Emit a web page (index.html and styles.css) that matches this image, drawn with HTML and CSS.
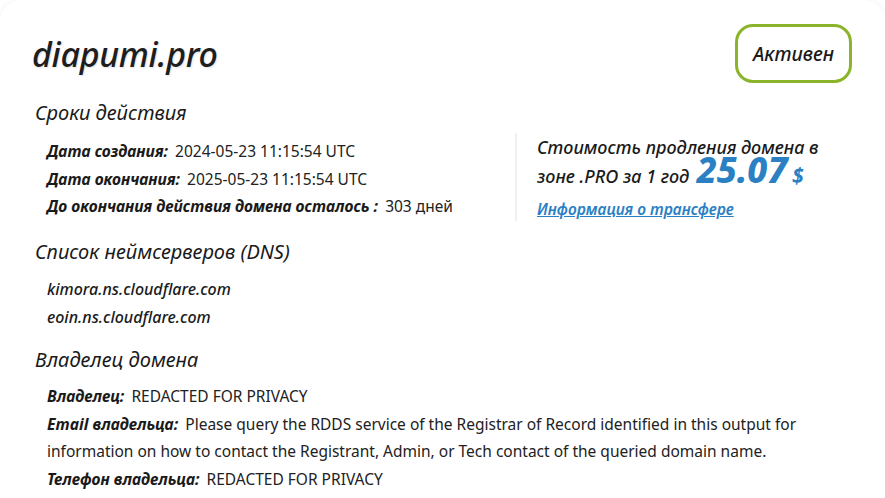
FILE: index.html
```html
<!DOCTYPE html>
<html lang="ru">
<head>
<meta charset="utf-8">
<link rel="stylesheet" href="styles.css">
</head>
<body>
<div class="card">
  <header class="top">
    <h1 class="domain">diapumi.pro</h1>
    <div class="badge">Активен</div>
  </header>

  <section class="section">
    <h2 class="heading">Сроки действия</h2>
    <div class="split">
      <div class="rows dates">
        <div class="row"><span class="label">Дата создания:</span> <span class="value">2024-05-23 11:15:54 UTC</span></div>
        <div class="row"><span class="label">Дата окончания:</span> <span class="value">2025-05-23 11:15:54 UTC</span></div>
        <div class="row"><span class="label">До окончания действия домена осталось :</span> <span class="value">303 дней</span></div>
      </div>
      <div class="price">
        <div class="price-text">Стоимость продления домена в зоне .PRO за 1 год <span class="amount">25.07</span> <span class="currency">$</span></div>
        <a class="transfer" href="#">Информация о трансфере</a>
      </div>
    </div>
  </section>

  <section class="section">
    <h2 class="heading">Список неймсерверов (DNS)</h2>
    <div class="rows servers">
      <div class="row ns">kimora.ns.cloudflare.com</div>
      <div class="row ns">eoin.ns.cloudflare.com</div>
    </div>
  </section>

  <section class="section">
    <h2 class="heading">Владелец домена</h2>
    <div class="rows owner">
      <div class="row"><span class="label">Владелец:</span> <span class="value">REDACTED FOR PRIVACY</span></div>
      <div class="row"><span class="label">Email владельца:</span> <span class="value">Please query the RDDS service of the Registrar of Record identified in this output for information on how to contact the Registrant, Admin, or Tech contact of the queried domain name.</span></div>
      <div class="row"><span class="label">Телефон владельца:</span> <span class="value">REDACTED FOR PRIVACY</span></div>
    </div>
  </section>
</div>
</body>
</html>
```

FILE: styles.css
```css
* { box-sizing: border-box; }
html, body { margin: 0; padding: 0; background: #ffffff; }
body {
  font-family: "Noto Sans", "Open Sans", sans-serif;
  color: #1a1a1a;
}
.card {
  background: #fff;
  border-radius: 22px;
  box-shadow: 0 0 10px rgba(0,0,0,0.05);
  padding: 22px 32px 0 32px;
  min-height: 520px;
}
.top {
  display: flex;
  justify-content: space-between;
  align-items: flex-start;
  margin-bottom: 16px;
}
.domain {
  margin: 10px 0 0 0;
  font-size: 34px;
  font-style: italic;
  font-weight: 500;
  line-height: 44px;
  color: #1e1e1e;
  text-shadow: 1px 1px 2px rgba(0,0,0,0.12);
  letter-spacing: -0.3px;
}
.badge {
  margin-top: 2px;
  margin-right: 1px;
  width: 117px;
  height: 59px;
  border: 3px solid #8ab52b;
  border-radius: 18px;
  display: flex;
  align-items: center;
  justify-content: center;
  font-style: italic;
  font-size: 19.5px;
  font-weight: 500;
  color: #1a1a1a;
}
.section { margin: 0; }
.heading {
  margin: 0;
  padding-left: 3px;
  font-size: 20px;
  font-style: italic;
  font-weight: 400;
  line-height: 28px;
  color: #1a1a1a;
}
.split {
  display: flex;
  align-items: flex-start;
}
.rows { padding-left: 15px; }
.dates { width: 483px; padding-top: 11px; padding-bottom: 17px; }
.servers { padding-top: 9px; padding-bottom: 15px; }
.owner { padding-top: 9.5px; padding-right: 28px; }
.row {
  font-size: 15.5px;
  line-height: 27.5px;
}
.owner .row { line-height: 27.7px; }
.label {
  font-style: italic;
  font-weight: 700;
  font-size: 15.7px;
  margin-right: 3px;
}
.value {
  font-weight: 400;
  color: #222;
}
.ns {
  font-style: italic;
  font-weight: 500;
  font-size: 16px;
  line-height: 28px;
}
.price {
  margin-top: 5.5px;
  border-left: 2px solid #f1f1f1;
  padding: 0 0 1px 20px;
  width: 330px;
}
.price-text {
  font-style: italic;
  font-size: 18px;
  line-height: 29px;
  font-weight: 500;
}
.amount {
  margin-left: 3px;
  color: #2b80c4;
  font-size: 35.5px;
  font-weight: 800;
  font-style: italic;
  line-height: 0;
}
.currency {
  color: #2b80c4;
  font-size: 21px;
  font-weight: 700;
  line-height: 0;
}
.transfer {
  display: inline-block;
  margin-top: 8.5px;
  color: #2b80c4;
  font-style: italic;
  font-weight: 600;
  font-size: 15.5px;
  line-height: 20px;
  text-decoration: underline;
}
```
